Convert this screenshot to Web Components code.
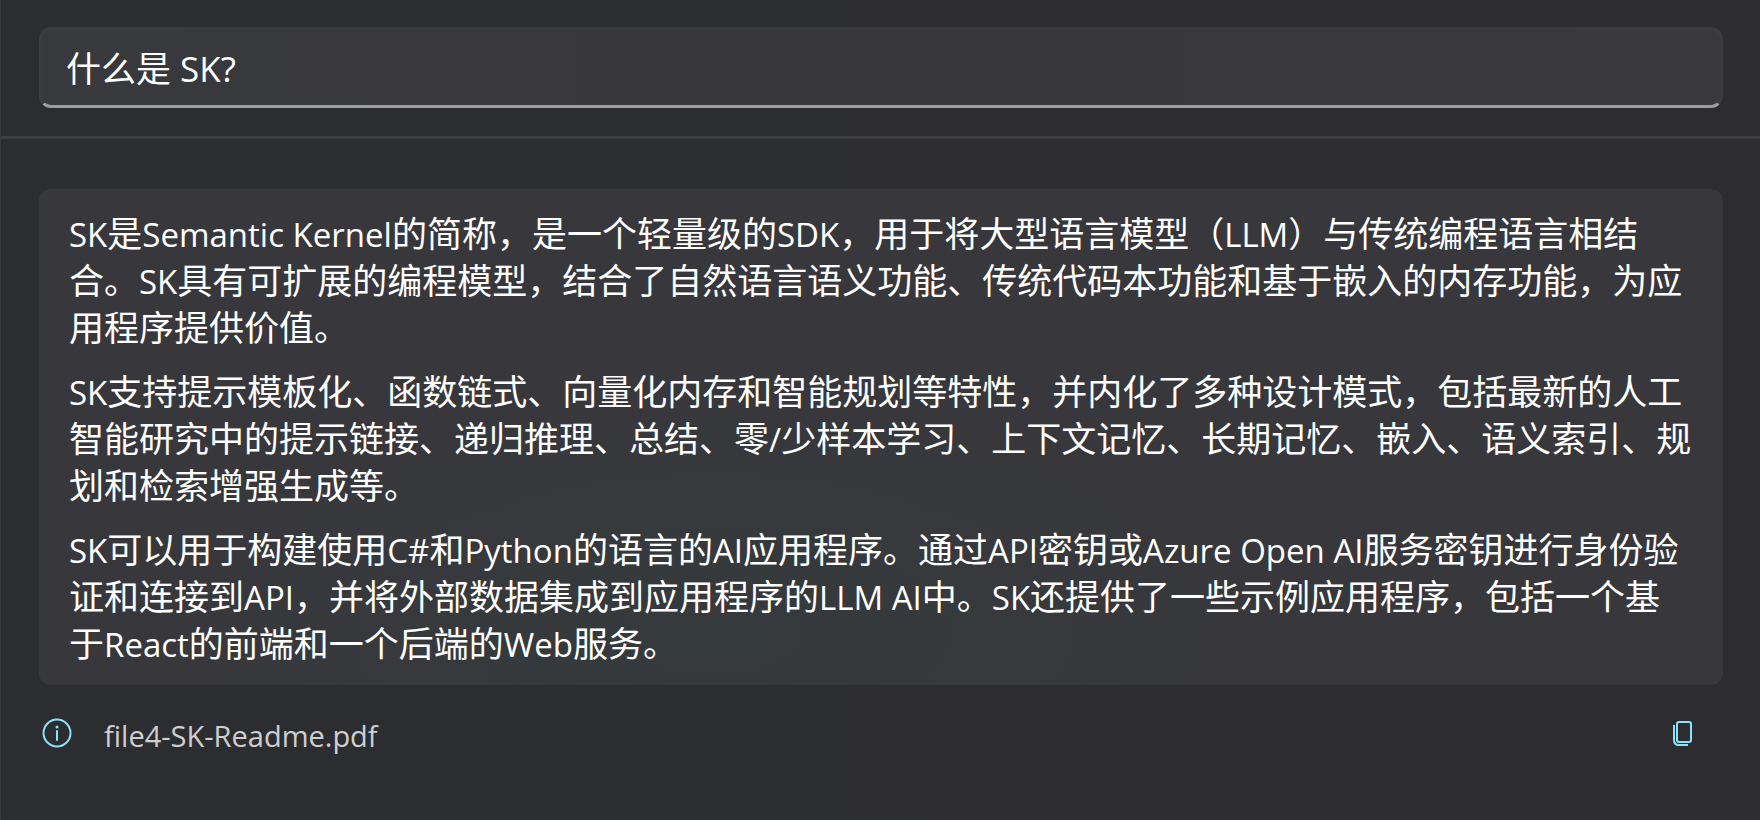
<!DOCTYPE html>
<html lang="zh-CN">
<head>
<meta charset="utf-8">
<meta name="viewport" content="width=device-width, initial-scale=1">
<title>SK</title>
<style>
  html, body { margin: 0; min-height: 100%; }
  body {
    background: linear-gradient(90deg, #2c2d31 0%, #2c2d31 45%, #2d2c31 70%, #2d2c31 100%);
    color: #fff;
    font-family: "Open Sans", "Noto Sans CJK SC", sans-serif;
  }
</style>
</head>
<body>
<chat-page>
  <ask-box slot="ask" label="问题" value="什么是 SK?"></ask-box>
  <answer-card>
    <p><span>SK</span>是<span>Semantic Kernel</span>的简称，是一个轻量级的<span>SDK</span>，用于将大型语言模型（<span>LLM</span>）与传统编程语言相结合。<span>SK</span>具有可扩展的编程模型，结合了自然语言语义功能、传统代码本功能和基于嵌入的内存功能，为应用程序提供价值。</p>
    <p><span>SK</span>支持提示模板化、函数链式、向量化内存和智能规划等特性，并内化了多种设计模式，包括最新的人工智能研究中的提示链接、递归推理、总结、零<span>/</span>少样本学习、上下文记忆、长期记忆、嵌入、语义索引、规划和检索增强生成等。</p>
    <p><span>SK</span>可以用于构建使用<span>C#</span>和<span>Python</span>的语言的<span>AI</span>应用程序。通过<span>API</span>密钥或<span>Azure Open AI</span>服务密钥进行身份验证和连接到<span>API</span>，并将外部数据集成到应用程序的<span>LLM AI</span>中。<span>SK</span>还提供了一些示例应用程序，包括一个基于<span>React</span>的前端和一个后端的<span>Web</span>服务。</p>
  </answer-card>
  <source-bar><a href="#file4-SK-Readme.pdf">file4-SK-Readme.pdf</a></source-bar>
</chat-page>

<script>
  const define = (name, html, init) => {
    const template = document.createElement('template');
    template.innerHTML = html;
    customElements.define(name, class extends HTMLElement {
      constructor() {
        super();
        this.attachShadow({ mode: 'open' }).append(template.content.cloneNode(true));
      }
      connectedCallback() { if (init) init(this); }
    });
  };

  define('ask-box', `
    <style>
      :host { display: block; }
      input {
        display: block; box-sizing: border-box; width: 100%; height: 81px;
        padding: 0 25px 2px 24px;
        border: 3px solid #3c3c40; border-bottom-color: #9e9ea1; border-radius: 12px;
        background: linear-gradient(90deg, #38393c, #39383c); color: #fff; outline: 0;
        font: 35px/48px "Open Sans", "Noto Sans CJK SC", sans-serif;
      }
    </style>
    <input type="text">`, host => {
      const input = host.shadowRoot.querySelector('input');
      input.value = host.getAttribute('value');
      input.setAttribute('aria-label', host.getAttribute('label'));
    });

  define('answer-card', `
    <style>
      :host {
        display: flex; flex-direction: column; gap: 17px;
        padding: 21px 30px 18px; border-radius: 12px;
        background: radial-gradient(ellipse at 40% 90%, #353a3c 0%, #37393c 20%, #38383c 36%);
        font-size: 35px; line-height: 47px;
      }
      ::slotted(p) { margin: 0; }
    </style>
    <slot></slot>`, host => {
      host.querySelectorAll('span').forEach(s => { s.style.fontSize = '33px'; s.style.lineHeight = '1'; });
    });

  define('source-bar', `
    <style>
      :host { display: flex; align-items: center; height: 54px; padding: 0 29px 0 0; }
      svg { display: block; fill: none; stroke: #8be3f8; }
      ::slotted(a) { flex: 1; margin-left: 31px; padding-top: 6px; color: #cfcfd0; font-size: 29px; line-height: 40px; text-decoration: none; }
      button { padding: 0; border: 0; background: none; }
    </style>
    <svg width="34" height="34" viewBox="0 0 34 34" aria-hidden="true">
      <circle cx="18" cy="17" r="13.5" stroke-width="2"/>
      <path d="M18 15v9" stroke-width="2" stroke-linecap="round"/>
      <circle cx="18" cy="11" r="1.5" fill="#8be3f8" stroke="none"/>
    </svg>
    <slot></slot>
    <button type="button" aria-label="复制">
      <svg width="24" height="26" viewBox="0 0 24 26" stroke-width="2">
        <rect x="7" y="2" width="14" height="20" rx="2"/>
        <path d="M4 5v15q0 5 5 5h9" stroke-linecap="butt"/>
      </svg>
    </button>`);

  define('chat-page', `
    <style>
      :host { display: block; box-sizing: border-box; min-height: 100vh; border-left: 1px solid #38393c; }
      header { padding: 27px 37px 28px 38px; border-bottom: 3px solid #3e3e42; }
      main { display: flex; flex-direction: column; gap: 21px; padding: 50px 37px 40px 38px; }
    </style>
    <header><slot name="ask"></slot></header>
    <main><slot></slot></main>`);
</script>
</body>
</html>
